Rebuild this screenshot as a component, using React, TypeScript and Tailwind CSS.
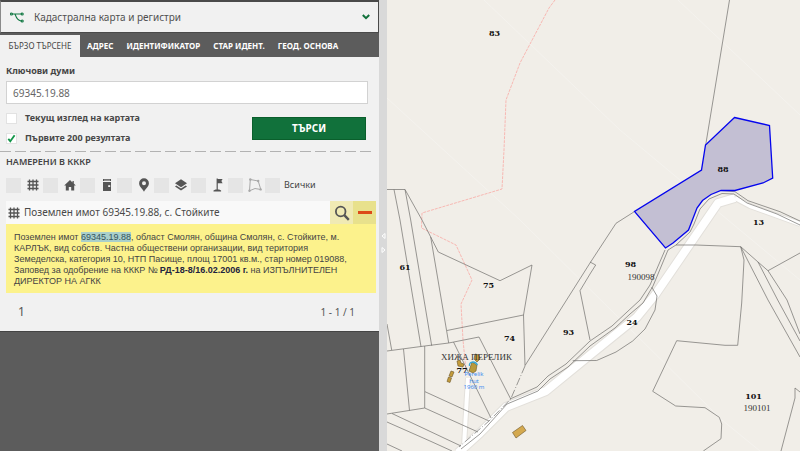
import { useState } from "react";
import type { ReactNode } from "react";

const tabs = ["БЪРЗО ТЪРСЕНЕ", "АДРЕС", "ИДЕНТИФИКАТОР", "СТАР ИДЕНТ.", "ГЕОД. ОСНОВА"];

function ParcelIcon() {
  return (
    <svg viewBox="0 0 12 12" className="h-3 w-3" fill="none" stroke="#555" strokeWidth="1.3">
      <path d="M2.5 0.5v11M6 0.5v11M9.5 0.5v11M0.5 2.5h11M0.5 6h11M0.5 9.5h11" />
    </svg>
  );
}

function HouseIcon() {
  return (
    <svg viewBox="0 0 12 12" className="h-3 w-3" fill="#555">
      <path d="M6 1 0.2 6.6h1.6V11.5h3V8h2.4v3.5h3V6.6h1.6L9.8 4.6V2H8.5v1.4z" />
    </svg>
  );
}

function DoorIcon() {
  return (
    <svg viewBox="0 0 12 14" className="h-3.5 w-3" fill="#555">
      <path d="M2 1h8v2H2zM2 4h8v9H2z" />
      <path d="M7.2 7.2h2v1.8h-2z" fill="#f1f1f1" />
      <path d="M3 1.8h6v.6H3z" fill="#f1f1f1" />
    </svg>
  );
}

function PinIcon() {
  return (
    <svg viewBox="0 0 12 14" className="h-3.5 w-3" fill="#555" fillRule="evenodd">
      <path d="M6 .3a4.9 4.9 0 0 0-4.9 4.9C1.100 8.600 4.800 11 6 13.800 7.200 11 10.900 8.600 10.900 5.200A4.900 4.900 0 0 0 6 .3zM6 3.300a2 2 0 1 1 0 4 2 2 0 0 1 0-4z" />
    </svg>
  );
}

function LayersIcon() {
  return (
    <svg viewBox="0 0 14 14" className="h-3.5 w-3.5" fill="#555">
      <path d="M7 1.200 13 5.200 7 9.200 1 5.200z" />
      <path d="M2.300 7.400 7 10.500l4.700-3.100L13 8.500l-6 4-6-4z" />
    </svg>
  );
}

function FlagIcon() {
  return (
    <svg viewBox="0 0 12 14" className="h-3.5 w-3" fill="#555">
      <path d="M4.600 .5h1.200v11.500H4.600zM5.800 1h4.800L9.400 3l1.200 2.200H5.800z" />
      <path d="M1.500 12.400 3.500 11.500h3.600l2 .9v1h-7.600z" />
    </svg>
  );
}

function PolygonIcon() {
  return (
    <svg viewBox="0 0 14 14" className="h-3.5 w-3.5" fill="none" stroke="#a8a8a8" strokeWidth="1">
      <path d="M2.300 1.500 10.200 3l2.600 8.500-5.800-1L1.500 12.800z" />
      <g fill="#a8a8a8" stroke="none">
        <circle cx="2.300" cy="1.500" r="1.200" />
        <circle cx="10.200" cy="3" r="1.200" />
        <circle cx="12.600" cy="11.400" r="1.200" />
        <circle cx="1.500" cy="12.700" r="1.200" />
      </g>
    </svg>
  );
}

const filters: { name: string; icon: ReactNode }[] = [
  { name: "Поземлени имоти", icon: <ParcelIcon /> },
  { name: "Сгради", icon: <HouseIcon /> },
  { name: "Самостоятелни обекти", icon: <DoorIcon /> },
  { name: "Адреси", icon: <PinIcon /> },
  { name: "Слоеве", icon: <LayersIcon /> },
  { name: "Геодезически точки", icon: <FlagIcon /> },
  { name: "Граници", icon: <PolygonIcon /> },
];

function Option({ label, on }: { label: string; on: boolean }) {
  const [checked, setChecked] = useState(on);
  return (
    <label className="flex h-5 items-center gap-2 text-[9px] font-bold text-[#484848]">
      <span className="relative flex h-[11px] w-[11px]">
        <input
          type="checkbox"
          checked={checked}
          onChange={() => setChecked(!checked)}
          className="h-full w-full appearance-none border border-[#e2e2e2] bg-white"
        />
        {checked && (
          <svg viewBox="0 0 11 11" className="pointer-events-none absolute inset-0" fill="none" stroke="#14964a" strokeWidth="1.800">
            <path d="M2.300 5.800 4.300 8.200 8.600 2.200" />
          </svg>
        )}
      </span>
      {label}
    </label>
  );
}

function RegistrySelect() {
  return (
    <div className="relative flex h-[33px] items-center border-t-2 border-r border-b border-l border-[#4a4a4a] border-l-[#8a8a8a]">
      <select aria-label="Регистър" className="h-full w-full appearance-none bg-[#f1f1f1] pl-[33px] text-[10px] text-[#505050]">
        <option>Кадастрална карта и регистри</option>
      </select>
      <svg viewBox="0 0 14 11" className="pointer-events-none absolute left-[9px] h-[11px] w-3.5" fill="none" stroke="#147a45" strokeWidth="1.200">
        <path d="M2.500 2H11M5 2c1 2.500 1.500 6 6 7" />
        <circle cx="1.500" cy="2" r="1" />
        <circle cx="12.200" cy="2" r="1" />
        <circle cx="12.200" cy="9" r="1" />
      </svg>
      <svg viewBox="0 0 8 6" className="pointer-events-none absolute right-2 h-1.5 w-2" fill="none" stroke="#11713b" strokeWidth="2">
        <path d="M0.800 1 4 4.200 7.200 1" />
      </svg>
    </div>
  );
}

function Sidebar() {
  const [active, setActive] = useState(0);
  const [query, setQuery] = useState("69345.19.88");
  return (
    <aside className="w-[379px] shrink-0 bg-[#5c5c5c]">
      <RegistrySelect />
      <div role="tablist" className="flex h-6 items-end">
        {tabs.map((tab, i) => (
          <button
            key={tab}
            role="tab"
            aria-selected={i === active}
            onClick={() => setActive(i)}
            className={
              i === active
                ? "mr-[7px] h-[22px] min-w-20 bg-[#f1f1f1] px-2 text-[8px] whitespace-nowrap text-[#444]"
                : "mr-[13px] h-[22px] text-[8px] font-bold whitespace-nowrap text-white"
            }
          >
            {tab}
          </button>
        ))}
      </div>
      <div className="border-b border-[#444] bg-[#f1f1f1] pb-2.5">
        <form onSubmit={(e) => e.preventDefault()}>
          <div className="pt-2 pr-[11px] pl-1.5">
            <label htmlFor="keywords" className="block h-4 text-[9px] leading-3 font-bold text-[#444]">
              Ключови думи
            </label>
            <input
              id="keywords"
              value={query}
              onChange={(e) => setQuery(e.target.value)}
              className="block h-[23px] w-full border border-[#d2d2d2] bg-white px-1.5 text-[10px] text-[#666]"
            />
          </div>
          <div className="flex items-center justify-between pt-1 pr-[13px] pl-1.5">
            <div>
              <Option label="Текущ изглед на картата" on={false} />
              <Option label="Първите 200 резултата" on={true} />
            </div>
            <button type="submit" className="h-[23px] w-[114px] border border-[#0a5f2c] bg-[#11713b] text-[10px] font-bold text-white">
              ТЪРСИ
            </button>
          </div>
        </form>
        <div className="mt-[3px] mr-1 h-px bg-[repeating-linear-gradient(90deg,#b2b2b2_0_11px,#f1f1f1_11px_15px)]" />
        <h2 className="mt-1 pl-1.5 text-[9px] leading-3 font-semibold text-[#444]">НАМЕРЕНИ В КККР</h2>
        <div className="mt-2 flex h-[18px] items-center pl-1.5">
          {filters.map((f) => (
            <label key={f.name} className="flex w-[37px] items-center gap-1">
              <input type="checkbox" aria-label={f.name} className="h-[15px] w-[15px] appearance-none bg-[#e5e5e5] checked:bg-[#14964a]" />
              <span className="flex w-4 justify-center">{f.icon}</span>
            </label>
          ))}
          <label className="flex items-center gap-1 text-[9px] text-[#444]">
            <input type="checkbox" className="h-[15px] w-[15px] appearance-none bg-[#e5e5e5] checked:bg-[#14964a]" />
            Всички
          </label>
        </div>
        <article className="mt-[7px] mr-[3px] ml-1.5">
          <header className="flex h-[23px] items-center bg-[#f9f9f9] pl-0.5">
            <ParcelIcon />
            <h3 className="grow pl-1 text-[10px] text-[#4a4a4a]">Поземлен имот 69345.19.88, с. Стойките</h3>
            <button aria-label="Покажи на картата" className="flex h-full w-[23px] items-center justify-center bg-[#f0eab4]">
              <svg viewBox="0 0 16 16" className="h-4 w-4" fill="none" stroke="#555">
                <circle cx="6.700" cy="6.500" r="4.800" strokeWidth="1.800" />
                <path d="m10.300 10.200 4.500 4.600" strokeWidth="2.400" />
              </svg>
            </button>
            <button aria-label="Скрий" className="flex h-full w-[23px] items-center justify-center bg-[#e8e18c]">
              <span className="h-[3px] w-3.5 bg-[#dc4a18]" />
            </button>
          </header>
          <p className="bg-[#fcf28c] pt-2 pr-5 pb-[6px] pl-2 font-['Liberation_Sans',Arial,sans-serif] text-[9px] leading-[11px] text-[#444]">
            Поземлен имот <mark className="bg-[#a9cfcb] text-[#36545c]">69345.19.88</mark>, област Смолян, община Смолян, с. Стойките, м. КАРЛЪК, вид собств. Частна
            обществени организации, вид територия Земеделска, категория 10, НТП Пасище, площ 17001 кв.м., стар номер 019088, Заповед за одобрение на КККР №{" "}
            <b className="text-[#1e2340]">РД-18-8/16.02.2006 г.</b> на ИЗПЪЛНИТЕЛЕН ДИРЕКТОР НА АГКК
          </p>
        </article>
        <nav aria-label="Страници" className="mt-2.5 flex h-[18px] items-center justify-between pr-6 pl-[18px] text-[#555]">
          <span className="text-xs">1</span>
          <span className="text-[10px]">1 - 1 / 1</span>
        </nav>
      </div>
    </aside>
  );
}

const boundaries = [
  "M387 189.500H405L422 220 430.700 237 438.300 252 500 280.700 532 265 523.500 315 525 365.600 590 263 616 223.300 634.300 211.700",
  "M394 189.500 400 220 421 346.700M405 189.500 410.700 220 431.700 345.700M430.700 237 448.700 343",
  "M387 324 391.700 350M387 351 424.700 346 448.700 343 479 337 510.700 399M447 330.500 523.500 315",
  "M590 262 595.700 265 590 274 580 290.700 590 340",
  "M403.500 349 409.500 410.500M424.700 346V408M387 414 424.700 408 478 432M425 391.700 489 421M453.500 342 491 418",
  "M392 413.500 461 446M387 422 430 441 452 451M387 444 402 451",
  "M510 399 537 387 548 376 566 364 590 341 612 326 627 312 640 300 650 285 665 250",
  "M461 449 480 434 507 404 538 391 550 379 568 367 590 346 615 328 630 314 643 303 653 286 668 250 676 245 690 232 694 224 700 209 709 199 722 193.500 734 194 747 203 777 214 800 225",
  "M721 190.500 735 191.700 748 200.700 780 211.700 800 221",
  "M676 245H696L740.700 246.700 744 260 741.700 303 737.700 345.300H725L676.700 340.700 652.700 391.300 675.700 406 705 407.700 719.300 417.300 721.700 424 721 438.700 703.300 451",
  "M740.700 246.700 768 300 800 357M740.700 246.700 758 262 777.700 300 800 341M758 262 768 270.700 787 300 800 334M768 270.700 800 253",
  "M651.700 287 657 296 655 310 645 329 632.700 341 616 352 596.700 360.500 572.700 360.700",
  "M800 392 795 388V398L781 451M729.500 0 705.700 145",
];

const parcels = [
  { x: 494.500, y: 36, n: "83" },
  { x: 723, y: 171.500, n: "88" },
  { x: 758.500, y: 224.500, n: "13" },
  { x: 630.500, y: 266.500, n: "98" },
  { x: 405, y: 269.500, n: "61" },
  { x: 488.500, y: 287.500, n: "75" },
  { x: 509.500, y: 340.500, n: "74" },
  { x: 568.500, y: 334.500, n: "93" },
  { x: 632, y: 324.500, n: "24" },
  { x: 753.500, y: 399, n: "101" },
];

function CadastralMap() {
  return (
    <svg
      role="img"
      aria-label="Кадастрална карта"
      viewBox="387 0 413 451"
      preserveAspectRatio="xMinYMin slice"
      className="h-full w-full font-['DejaVu_Serif',serif]"
    >
      <rect x="387" width="413" height="451" fill="#f1eee8" />
      <g stroke="#f4f2ee" fill="none">
        <path d="M484 0 620 130 800 280M678 0 800 115M387 98 520 220 722 420 760 451" />
      </g>
      <g fill="none" stroke="#e3e0db" strokeLinejoin="round">
        <path d="M735 198 718 203 655 295 637 317 590 355 546 391 506 407 480 433 458 453" strokeWidth="10" />
        <path d="M735 198 750 206 800 224" strokeWidth="6" />
        <path d="M468 378 464 446" strokeWidth="6" />
      </g>
      <g fill="none" stroke="#fff" strokeLinejoin="round">
        <path d="M735 198 718 203 655 295 637 317 590 355 546 391 506 407 480 433 458 453" strokeWidth="8" />
        <path d="M735 198 750 206 800 224" strokeWidth="4" />
        <path d="M468 378 464 446" strokeWidth="4" />
      </g>
      <path
        d="M555 0 549 8 520 63 506 100 504 150 502 189 422 213 421.500 228 456 245 472 280 461 304 463 340 466 370"
        fill="none"
        stroke="#f9aaa5"
        strokeDasharray="3 1"
        opacity="0.8"
      />
      <g fill="none" stroke="#706e6b" strokeWidth="0.700">
        {boundaries.map((d) => (
          <path key={d} d={d} />
        ))}
        <path d="M525 366 510.700 399 489 421 459 447" strokeDasharray="8 2 1 2" />
      </g>
      <path
        d="M734.500 117.500 769.500 125.500 772.700 178 763 183 735 190.500H721L711 194.500 702.500 200.500 697 208 688.500 230 673 243 665.500 248 634.500 211.500 701.500 170 705.500 145Z"
        fill="#c3bfd3"
        stroke="#0505ee"
        strokeWidth="1.300"
      />
      <g stroke="#6b5427" strokeWidth="0.600">
        <path d="m512.500 432.500 10-7 3.500 5-10 7.500z" fill="#d4a94f" />
        <path d="m451 371 3 1-2 5-3-1zM448.500 377l3 1-1.500 4.500-3-1z" fill="#c39b3a" />
        <path d="m457 361 3-1 1 3 3 1-1 3-5-1z" fill="#c39b3a" />
        <path d="m475 354 4 1 1 4-3 3-3-3z" fill="#c39b3a" />
        <path d="m472 362 5 3-1 6-3 2-4-2z" fill="#b89a3c" />
      </g>
      <path d="M469.500 366c-1-4 5-6 8-1" fill="none" stroke="#35a7d8" strokeWidth="1.300" />
      <g textAnchor="middle">
        <g className="text-[6px] font-['Noto_Sans',sans-serif]" fill="#3f8cf0">
          <text x="474" y="376">Perelik</text>
          <text x="474" y="382.500">hut</text>
          <text x="474" y="389">1960 m</text>
        </g>
        <g className="text-[8px] font-bold" fill="#111">
          {parcels.map((p) => (
            <text key={p.n} x={p.x} y={p.y}>
              {p.n}
            </text>
          ))}
          <text x="462" y="373">77</text>
        </g>
        <g className="font-['Liberation_Serif',serif] text-[9px]" fill="#333">
          <text x="641" y="279.500">190098</text>
          <text x="757" y="410.500">190101</text>
          <text x="476.500" y="359.500">ХИЖА ПЕРЕЛИК</text>
        </g>
      </g>
    </svg>
  );
}

export default function App() {
  return (
    <div className="flex h-screen w-full overflow-hidden font-['Noto_Sans','Open_Sans',sans-serif]">
      <Sidebar />
      <div className="flex w-2 shrink-0 flex-col items-center justify-center gap-1.5 bg-[#d9d9d9] pt-[34px]">
        <button aria-label="Свий панела">
          <svg viewBox="0 0 5 8" className="h-2 w-[5px]" fill="none" stroke="#fff">
            <path d="M4 1.500v5L1 4z" />
          </svg>
        </button>
        <button aria-label="Разгъни панела">
          <svg viewBox="0 0 5 8" className="h-2 w-[5px]" fill="none" stroke="#fff">
            <path d="M1 1.500v5L4 4z" />
          </svg>
        </button>
      </div>
      <main className="min-w-0 flex-1">
        <CadastralMap />
      </main>
    </div>
  );
}
